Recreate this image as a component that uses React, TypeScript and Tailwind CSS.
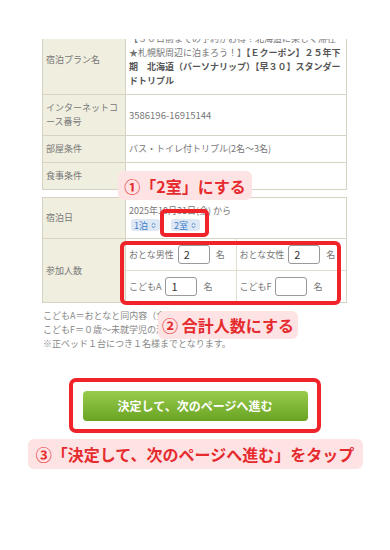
import { ChevronsUpDown } from "lucide-react";

const jp = "font-['Noto_Sans_CJK_JP','Noto_Sans',sans-serif]";

function Label({ children }: { children: React.ReactNode }) {
  return (
    <div className="flex w-[83px] shrink-0 items-center border-r border-[#d6d3c2] bg-[#efeedf] px-[3px] py-[6px] text-[9px] leading-[14px] text-[#777]">
      {children}
    </div>
  );
}

function Pill({ text }: { text: string }) {
  return (
    <span className="inline-flex h-[12px] items-center gap-[2px] rounded-[3px] bg-[#dde8f4] px-[3px] text-[9px] leading-none text-[#3b7bc9]">
      {text}
      <ChevronsUpDown size={7} strokeWidth={3} />
    </span>
  );
}

function Count({ label, value }: { label: string; value: string }) {
  return (
    <div className="flex h-[31px] flex-1 items-center px-[3px] text-[9px] text-[#777]">
      <span>{label}</span>
      <div className="ml-[4px] flex h-[19px] w-[32px] items-center rounded-[3px] border border-[#999] bg-white px-[5px] text-[11px] text-[#333]">
        {value}
      </div>
      <span className="ml-[6px]">名</span>
    </div>
  );
}

export default function App() {
  return (
    <div className={"relative h-[550px] w-[390px] overflow-hidden bg-white " + jp}>
      <div className="mt-[39px] overflow-hidden">
        <div className="-mt-[14px] ml-[42px] w-[305px] border border-[#d6d3c2]">
          <div className="flex border-b border-[#d6d3c2]">
            <Label>宿泊プラン名</Label>
            <div className="flex-1 whitespace-nowrap bg-white px-[3px] py-[6px] text-[9px] leading-[14px] text-[#777]">
              <div>【３０日前までの予約がお得！北海道に楽しく滞在</div>
              <div>
                ★札幌駅周辺に泊まろう！】<b className="text-[#555]">【Ｅクーポン】２５年下</b>
              </div>
              <div className="font-bold text-[#555]">期　北海道（バーソナリップ）【早３０】スタンダー</div>
              <div className="font-bold text-[#555]">ドトリプル</div>
            </div>
          </div>
          <div className="flex border-b border-[#d6d3c2]">
            <Label>
              インターネットコ
              <br />
              ース番号
            </Label>
            <div className="flex flex-1 items-center bg-white px-[3px] text-[9.5px] text-[#777]">3586196-16915144</div>
          </div>
          <div className="flex border-b border-[#d6d3c2]">
            <Label>部屋条件</Label>
            <div className="flex flex-1 items-center bg-white px-[3px] text-[9px] text-[#777]">バス・トイレ付トリプル(2名〜3名)</div>
          </div>
          <div className="flex">
            <Label>食事条件</Label>
            <div className="flex flex-1 items-center bg-white px-[3px] text-[9px] text-[#777]">なし</div>
          </div>
        </div>
      </div>

      <div className="mt-[7px] ml-[42px] w-[305px] border border-[#d6d3c2]">
        <div className="flex border-b border-[#d6d3c2]">
          <Label>宿泊日</Label>
          <div className="flex-1 bg-white px-[3px] py-[6px] text-[9px] leading-[14px] text-[#777]">
            <div>2025年10月31日(金) から</div>
            <div className="flex h-[14px] items-center gap-[11px] pl-[2px]">
              <Pill text="1泊" />
              <Pill text="2室" />
            </div>
          </div>
        </div>
        <div className="flex">
          <Label>参加人数</Label>
          <div className="flex-1 bg-white">
            <div className="flex border-b border-[#e2dfd0]">
              <Count label="おとな男性" value="2" />
              <div className="w-px bg-[#e2dfd0]" />
              <Count label="おとな女性" value="2" />
            </div>
            <div className="flex">
              <Count label="こどもA" value="1" />
              <div className="w-px bg-[#e2dfd0]" />
              <Count label="こどもF" value="" />
            </div>
          </div>
        </div>
      </div>

      <div className="mt-[6px] ml-[43px] whitespace-nowrap text-[9px] leading-[14px] text-[#888]">
        <div>こどもA＝おとなと同内容（食事・寝具あり）</div>
        <div>こどもF＝０歳〜未就学児の添い寝（食事・寝具なし）</div>
        <div>※正ベッド１台につき１名様までとなります。</div>
      </div>

      <div className="mt-[27px] flex justify-center">
        <div className="flex h-[55px] w-[252px] items-center justify-center rounded-[7px] border-4 border-[#f0222a] bg-white">
          <button
            type="button"
            className="h-[30px] w-[225px] rounded-[4px] bg-linear-to-b from-[#98cc4c] to-[#6aa321] text-[12px] font-bold text-white"
          >
            決定して、次のページへ進む
          </button>
        </div>
      </div>

      <div className="mt-[6px] flex justify-center">
        <div className="flex h-[30px] w-[335px] items-center justify-center rounded-[6px] bg-[#fde3e4] text-[16px] font-bold whitespace-nowrap text-[#e62b2f]">
          ③「決定して、次のページへ進む」をタップ
        </div>
      </div>

      {/* annotations over the form */}
      <div className="absolute top-[171px] left-[118px] flex h-[29px] w-[134px] items-center justify-center rounded-[6px] bg-[#fde3e4] text-[16px] font-bold text-[#e62b2f]">
        ①「2室」にする
      </div>
      <div className="absolute top-[209px] left-[160px] h-[28px] w-[49px] rounded-[5px] border-4 border-[#f0222a]" />
      <div className="absolute top-[241px] left-[120px] h-[64px] w-[221px] rounded-[6px] border-4 border-[#f0222a]" />
      <div className="absolute top-[311px] left-[158px] flex h-[28px] w-[140px] items-center justify-center rounded-[6px] bg-[#fde3e4] text-[16px] font-bold text-[#e62b2f]">
        ② 合計人数にする
      </div>
    </div>
  );
}
